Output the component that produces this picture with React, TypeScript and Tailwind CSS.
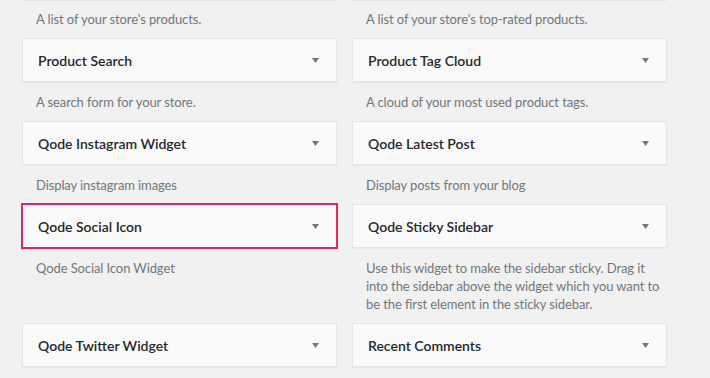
const widgets = [
  { title: 'Product Search', desc: ['A search form for your store.'] },
  { title: 'Product Tag Cloud', desc: ['A cloud of your most used product tags.'] },
  { title: 'Qode Instagram Widget', desc: ['Display instagram images'] },
  { title: 'Qode Latest Post', desc: ['Display posts from your blog'] },
  { title: 'Qode Social Icon', desc: ['Qode Social Icon Widget'], active: true },
  {
    title: 'Qode Sticky Sidebar',
    desc: [
      'Use this widget to make the sidebar sticky. Drag it',
      'into the sidebar above the widget which you want to',
      'be the first element in the sticky sidebar.',
    ],
  },
  { title: 'Qode Twitter Widget', desc: [] },
  { title: 'Recent Comments', desc: [] },
];

const topDescs = ["A list of your store's products.", "A list of your store's top-rated products."];

function Arrow() {
  return (
    <svg width="7" height="5" viewBox="0 0 7 5" className="shrink-0">
      <path d="M0 0 H7 L3.5 5 Z" fill="#72777c" />
    </svg>
  );
}

export default function App() {
  return (
    <div
      className="w-[710px] h-[378px] overflow-hidden bg-[#f1f1f1]"
      style={{ fontFamily: 'Lato, "Open Sans", sans-serif' }}
    >
      <div className="grid grid-cols-[315px_315px] gap-x-[15px] pl-[22px]">
        {/* tail of the previous row's cards */}
        {topDescs.map((d) => (
          <div key={d}>
            <div className="h-px bg-[#e5e5e5]" />
            <div className="pt-[9px] pb-[10px] pl-[14px] text-[13px] tracking-[-0.1px] leading-[18px] text-[#72777c] whitespace-nowrap">
              {d}
            </div>
          </div>
        ))}
        {widgets.map((w) => (
          <div key={w.title}>
            <div
              className={`h-[44px] flex items-center justify-between pl-[15px] pr-[17px] bg-[#fafafa] shadow-[0_1px_1px_rgba(0,0,0,0.04)] ${
                w.active ? 'border-2 border-[#e4295a] -m-px h-[46px] pl-[14px] pr-[16px]' : 'border border-[#e5e5e5]'
              }`}
            >
              <span className="text-[14px] font-semibold text-[#23282d]">{w.title}</span>
              <Arrow />
            </div>
            {w.desc.length > 0 && (
              <div className="pt-[11px] pb-[10px] pl-[14px] text-[13px] tracking-[-0.1px] leading-[18px] text-[#72777c] whitespace-nowrap">
                {w.desc.map((l) => (
                  <div key={l}>{l}</div>
                ))}
              </div>
            )}
          </div>
        ))}
      </div>
    </div>
  );
}
